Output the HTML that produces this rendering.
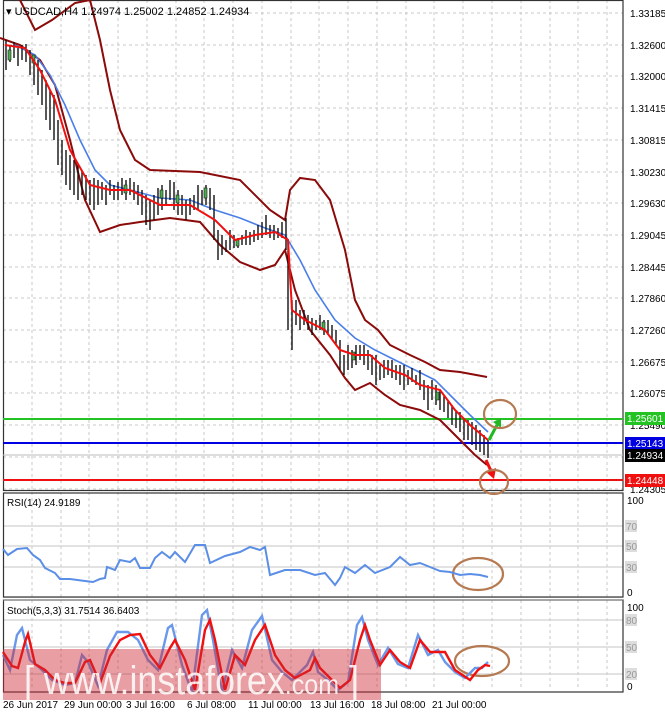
<!DOCTYPE html><html><head><style>
body{margin:0;background:#fff;width:665px;height:712px;overflow:hidden;font-family:"Liberation Sans",sans-serif}
svg text{font-family:"Liberation Sans",sans-serif}
</style></head><body>
<svg width="665" height="712" viewBox="0 0 665 712" xmlns="http://www.w3.org/2000/svg">
<rect width="665" height="712" fill="#fff"/>
<g stroke="#c8c8c8" stroke-dasharray="3,3" stroke-width="1">
<path d="M32 0V690M61 0V690M89 0V690M118 0V690M147 0V690M176 0V690M204 0V690M233 0V690M262 0V690M291 0V690M319 0V690M348 0V690M377 0V690M406 0V690M434 0V690M463 0V690M492 0V690M521 0V690M550 0V690M578 0V690M607 0V690"/>
<path d="M3 13H623M3 45H623M3 76H623M3 108H623M3 140H623M3 172H623M3 203H623M3 235H623M3 267H623M3 298H623M3 330H623M3 362H623M3 393H623M3 425H623M3 457H623M3 489H623"/>
</g>
<g stroke="#d0d0d0" stroke-width="1.3"><path d="M3 526H623M3 546H623M3 567H623M3 620H623M3 647H623M3 674H623"/></g>
<g fill="none" stroke="#333" stroke-width="1.2">
<rect x="3.5" y="0.5" width="619.5" height="490"/>
<rect x="3.5" y="493" width="619.5" height="104"/>
<rect x="3.5" y="600" width="619.5" height="92"/>
</g>
<path d="M3 597.5H623M3 600H623" stroke="#777" stroke-width="1"/>
<path d="M3 419H623" stroke="#22c322" stroke-width="2"/>
<path d="M3 443H623" stroke="#0000e0" stroke-width="2"/>
<path d="M3 455H623" stroke="#bbb" stroke-width="1"/>
<path d="M3 480H623" stroke="#f01010" stroke-width="2"/>
<g fill="none" stroke="#8b0a0a" stroke-width="2">
<path d="M20 0L35 30L52 20L75 3L90 0L100 40L110 90L120 130L135 160L150 170L200 172L240 180L270 210L285 220L290 190L300 178L315 180L330 200L345 250L355 300L365 320L378 330L390 345L410 355L425 362L440 370L460 372L487 377"/>
<path d="M0 38L20 45L40 60L55 85L70 140L85 200L100 232L120 225L140 222L170 218L200 222L220 245L240 262L260 270L275 265L285 250L295 290L310 330L330 355L345 378L355 390L370 383L385 395L400 405L420 410L440 420L460 440L475 455L487 465"/>
</g>
<path d="M15 45L35 55L50 75L65 105L80 140L95 170L110 185L130 190L160 198L190 200L215 210L240 218L265 228L285 235L300 260L315 290L335 320L355 338L375 350L395 360L415 370L435 380L455 400L470 415L488 432" fill="none" stroke="#4a7ee8" stroke-width="1.6"/>
<path d="M6 40V70M10 45V62M14 42V58M18 48V66M22 45V60M26 44V62M30 50V75M34 55V85M38 60V95M42 70V105M46 80V120M50 90V130M54 95V140M58 120V165M62 140V175M66 150V185M70 155V190M74 160V195M78 165V200M82 170V195M86 175V200M90 180V205M94 178V210M98 180V205M102 182V200M106 185V205M110 180V195M114 185V200M118 182V200M122 178V195M126 180V200M130 178V195M134 182V200M138 185V205M142 190V215M146 195V225M150 200V230M154 195V220M158 188V215M162 185V210M166 190V205M170 180V200M174 182V210M178 190V215M182 195V215M186 200V220M190 198V215M194 195V210M198 185V210M202 190V205M206 185V205M210 188V210M214 195V240M218 230V260M222 235V255M226 240V252M230 230V250M234 235V248M238 238V248M242 235V245M246 230V245M250 232V245M254 230V242M258 225V240M262 222V238M266 215V235M270 225V238M274 225V240M278 228V238M282 222V238M286 218V250M288 240V330M292 300V350M296 300V325M300 310V330M304 310V325M308 315V330M312 318V335M316 320V330M320 315V330M324 320V335M328 320V335M332 325V340M336 330V345M340 340V370M344 355V375M348 345V370M352 350V368M356 345V365M360 345V360M364 345V365M368 350V370M372 355V375M376 355V385M380 365V380M384 360V378M388 360V375M392 360V378M396 365V380M400 365V385M404 365V390M408 370V385M412 368V382M416 375V385M420 370V390M424 380V400M428 385V410M432 380V400M436 385V405M440 390V410M444 395V412M448 400V418M452 405V425M456 410V428M460 412V432M464 418V440M468 420V440M472 422V445M476 425V450M480 430V452M484 435V455M488 440V458" stroke="#111" stroke-width="1.4"/>
<path d="M8 50h3v10h-3zM32 55h3v8h-3zM124 185h3v8h-3zM160 190h3v8h-3zM176 195h3v8h-3zM204 188h3v10h-3zM236 240h3v6h-3zM322 322h3v8h-3zM352 352h3v8h-3zM436 392h3v8h-3z" fill="#4caf50" stroke="#111" stroke-width=".6"/>
<path d="M5 45L25 48L40 70L55 100L70 150L90 185L110 190L130 190L160 205L190 205L215 220L235 240L255 235L275 232L288 240L292 310L305 320L325 330L340 350L355 355L370 355L385 368L405 375L420 385L440 390L455 410L470 425L488 440" fill="none" stroke="#f01010" stroke-width="2"/>
<path d="M489 440L497 425" stroke="#22b822" stroke-width="3"/><path d="M493 422L501 418L501 428Z" fill="#22b822"/>
<path d="M486 460L491 471" stroke="#f01010" stroke-width="3"/><path d="M486 472L494 479L496 468Z" fill="#f01010"/>
<g fill="none" stroke="#b67a52" stroke-width="2.2">
<ellipse cx="500" cy="414" rx="16" ry="14"/><ellipse cx="494" cy="482" rx="14" ry="12"/>
<ellipse cx="478" cy="574" rx="25" ry="16"/><ellipse cx="482" cy="661" rx="27" ry="15"/></g>
<path d="M3 549L8 555L17 549L27 548L33 555L40 560L45 568L55 573L60 579L70 579L85 581L93 582L100 579L105 578L107 567L115 570L120 560L130 562L135 558L140 568L150 568L155 558L162 552L170 558L175 552L185 562L195 545L205 545L210 563L225 556L240 552L250 547L260 550L265 547L270 575L285 570L300 570L315 575L325 573L335 585L340 578L345 567L355 573L365 565L375 573L390 567L400 557L410 565L420 563L430 567L440 571L450 572L460 575L470 574L480 575L488 577" fill="none" stroke="#5b8ee6" stroke-width="2"/>
<path d="M3 655L10 670L17 635L22 628L30 660L40 668L52 680L65 685L75 683L82 655L88 662L98 686L107 650L117 632L128 632L138 640L148 660L158 670L168 628L172 625L182 665L192 692L202 615L207 610L213 640L222 692L232 650L242 668L252 630L262 616L272 660L282 672L292 680L307 665L313 652L318 672L328 680L338 690L348 682L357 625L362 617L368 640L378 665L388 648L398 664L408 668L418 635L428 655L438 650L445 662L455 672L465 678L475 668L482 668L488 662" fill="none" stroke="#6a98ea" stroke-width="2.4"/>
<path d="M3 652L12 666L18 668L25 642L28 634L35 664L45 670L55 680L65 683L75 683L85 662L90 660L100 683L110 656L120 640L130 635L140 634L150 655L160 668L170 648L175 640L185 660L195 690L205 630L210 620L215 640L225 690L235 655L245 665L255 640L265 625L275 655L285 670L295 678L310 670L315 658L320 668L330 678L340 688L350 680L360 640L365 625L370 640L380 665L390 650L400 662L410 668L420 640L430 652L440 652L445 652L455 670L470 680L478 670L485 665L490 666" fill="none" stroke="#f01010" stroke-width="2.4"/>
<rect x="3" y="649" width="378" height="51" fill="rgba(205,40,50,0.45)"/>
<text x="24" y="694" font-size="40" fill="#fff" fill-opacity=".85" textLength="335" lengthAdjust="spacingAndGlyphs">[ www.instaforex<tspan font-size="28">.com</tspan> ]</text>
<text x="6" y="15" font-size="11" fill="#000">▾ USDCAD,H4  1.24974 1.25002 1.24852 1.24934</text>
<text x="7" y="506" font-size="10" fill="#000">RSI(14) 24.9189</text>
<text x="7" y="614" font-size="10" fill="#000">Stoch(5,3,3) 31.7514 36.6403</text>
<g font-size="10" fill="#000">
<text x="630" y="17">1.33185</text><text x="630" y="49">1.32600</text><text x="630" y="80">1.32000</text><text x="630" y="112">1.31415</text><text x="630" y="144">1.30815</text><text x="630" y="176">1.30230</text><text x="630" y="207">1.29630</text><text x="630" y="239">1.29045</text><text x="630" y="271">1.28445</text><text x="630" y="302">1.27860</text><text x="630" y="334">1.27260</text><text x="630" y="366">1.26675</text><text x="630" y="397">1.26075</text><text x="630" y="429">1.25490</text><text x="630" y="493">1.24305</text>
<text x="627" y="504">100</text><text x="627" y="596">0</text><text x="627" y="611">100</text><text x="627" y="690">0</text>
</g>
<g font-size="10" fill="#999"><rect x="625" y="520" width="12" height="12" fill="#ddd"/><text x="626" y="530">70</text>
<rect x="625" y="540" width="12" height="12" fill="#ddd"/><text x="626" y="550">50</text>
<rect x="625" y="561" width="12" height="12" fill="#ddd"/><text x="626" y="571">30</text>
<rect x="625" y="614" width="12" height="12" fill="#ddd"/><text x="626" y="624">80</text>
<rect x="625" y="641" width="12" height="12" fill="#ddd"/><text x="626" y="651">50</text>
<rect x="625" y="668" width="12" height="12" fill="#ddd"/><text x="626" y="678">20</text></g>
<rect x="625" y="412" width="40" height="13" fill="#22c322"/><text x="627" y="422" font-size="10" fill="#fff">1.25601</text>
<rect x="625" y="437" width="40" height="13" fill="#0000e0"/><text x="627" y="447" font-size="10" fill="#fff">1.25143</text>
<rect x="625" y="449" width="40" height="13" fill="#000"/><text x="627" y="459" font-size="10" fill="#fff">1.24934</text>
<rect x="625" y="474" width="40" height="13" fill="#f01010"/><text x="627" y="484" font-size="10" fill="#fff">1.24448</text>
<g font-size="10" fill="#000">
<text x="3" y="708">26 Jun 2017</text><text x="64" y="708">29 Jun 00:00</text><text x="126" y="708">3 Jul 16:00</text><text x="187" y="708">6 Jul 08:00</text><text x="248" y="708">11 Jul 00:00</text><text x="310" y="708">13 Jul 16:00</text><text x="371" y="708">18 Jul 08:00</text><text x="432" y="708">21 Jul 00:00</text>
</g>
</svg>
</body></html>
